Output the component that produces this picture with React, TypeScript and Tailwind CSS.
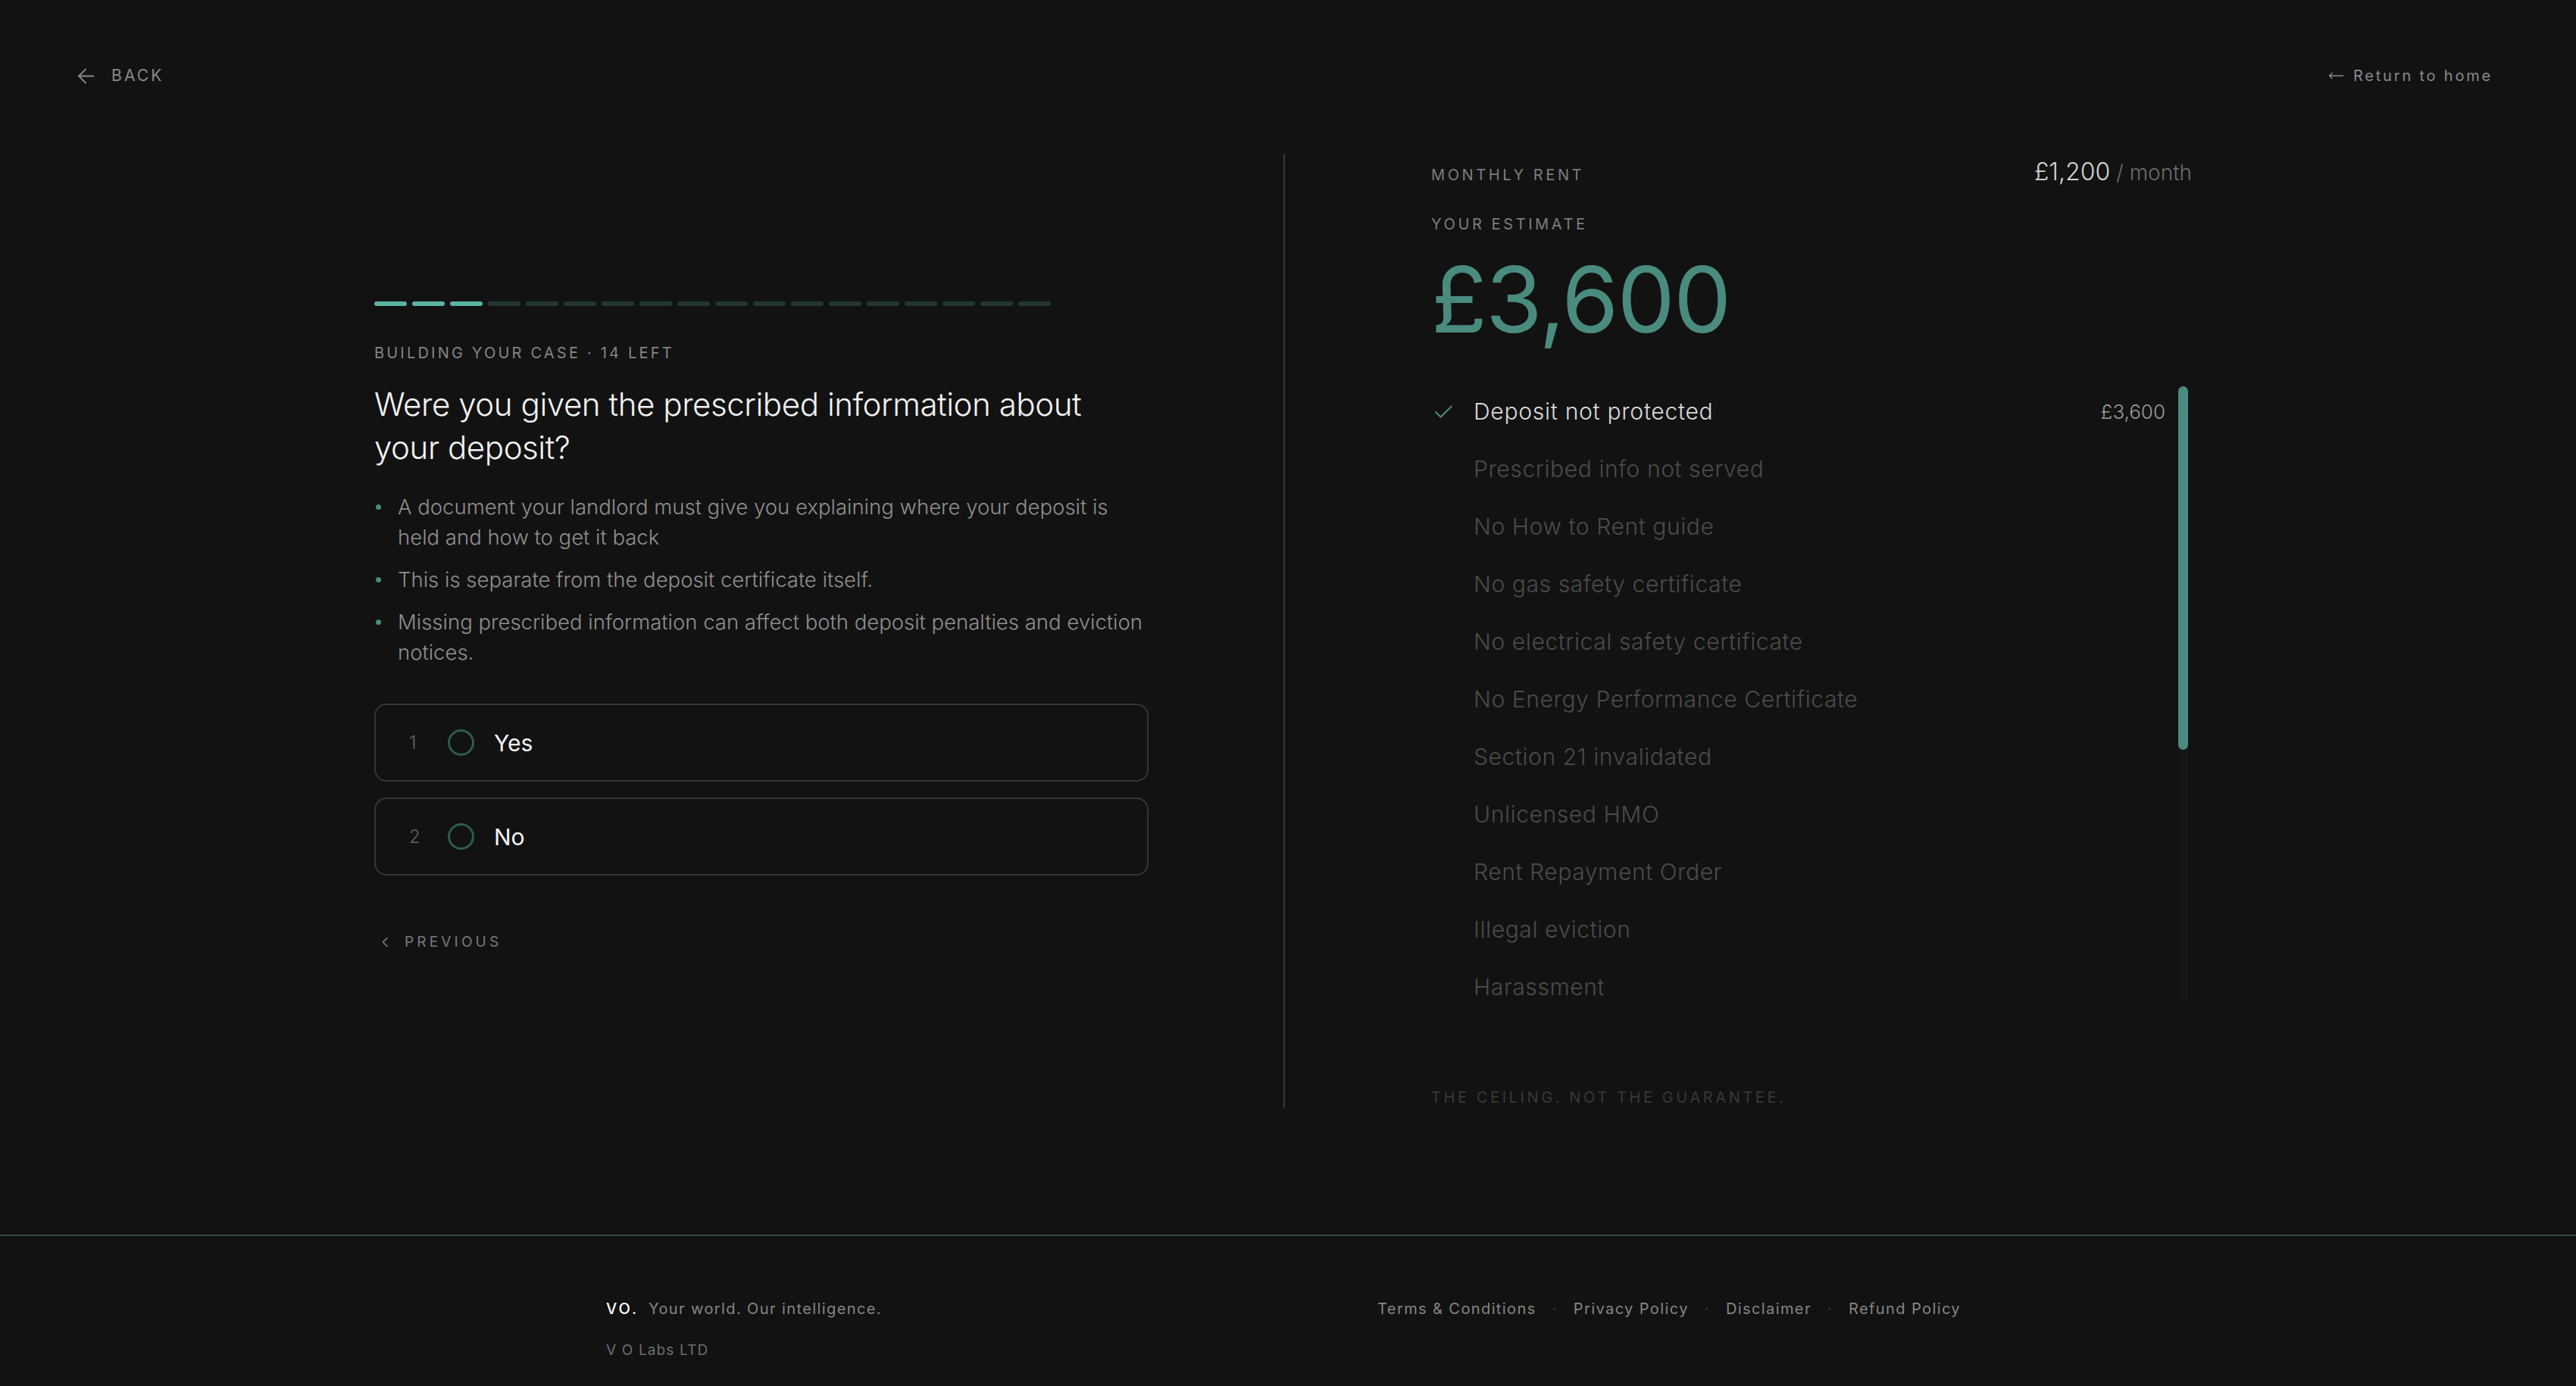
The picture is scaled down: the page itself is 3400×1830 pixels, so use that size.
import React from 'react';

const FACTORS = [
  { label: 'Deposit not protected', amount: '£3,600', done: true },
  { label: 'Prescribed info not served' },
  { label: 'No How to Rent guide' },
  { label: 'No gas safety certificate' },
  { label: 'No electrical safety certificate' },
  { label: 'No Energy Performance Certificate' },
  { label: 'Section 21 invalidated' },
  { label: 'Unlicensed HMO' },
  { label: 'Rent Repayment Order' },
  { label: 'Illegal eviction' },
  { label: 'Harassment' },
];

const NOTES = [
  'A document your landlord must give you explaining where your deposit is held and how to get it back',
  'This is separate from the deposit certificate itself.',
  'Missing prescribed information can affect both deposit penalties and eviction notices.',
];

const TOTAL_STEPS = 18;
const DONE_STEPS = 3;

function Progress() {
  return (
    <div className="flex gap-[7px]">
      {Array.from({ length: TOTAL_STEPS }).map((_, i) => (
        <div
          key={i}
          className={i < DONE_STEPS ? 'h-[6px] w-[43px] rounded-full bg-[#5bb3a5]' : 'h-[6px] w-[43px] rounded-full bg-[#223733]'}
        />
      ))}
    </div>
  );
}

function Option({ n, label }: { n: number; label: string }) {
  return (
    <button className="flex h-[103px] w-full items-center rounded-[16px] border-2 border-[#363636] pl-[44px] text-left">
      <span className="w-[16px] text-[24px] leading-none font-light text-[#626262]">{n}</span>
      <span className="ml-[35px] h-[35px] w-[35px] rounded-full border-[3px] border-[#2f5b53]" />
      <span className="ml-[26px] text-[30px] leading-none text-[#f4f4f4]">{label}</span>
    </button>
  );
}

function Question() {
  return (
    <div className="w-[1022px]">
      <Progress />
      <div className="mt-[48px] text-[20px] leading-[28px] tracking-[0.16em] text-[#858585]">
        BUILDING YOUR CASE · 14 LEFT
      </div>
      <h1 className="mt-[25px] font-['Inter_Light','Inter',sans-serif] text-[42px] leading-[57px] font-light tracking-[-0.01em] text-[#f2f2f2]">
        Were you given the prescribed information about your deposit?
      </h1>
      <ul className="mt-[30px] flex flex-col gap-[16px]">
        {NOTES.map(note => (
          <li key={note} className="flex">
            <span className="flex h-[40px] w-[31px] shrink-0 items-center">
              <span className="ml-[2px] h-[7px] w-[7px] rounded-full bg-[#4a8b7f]" />
            </span>
            <span className="font-['Inter_Light','Inter',sans-serif] text-[27.5px] leading-[40px] font-light text-[#8f8f8f]">{note}</span>
          </li>
        ))}
      </ul>
      <div className="mt-[48px] flex flex-col gap-[21px]">
        <Option n={1} label="Yes" />
        <Option n={2} label="No" />
      </div>
      <button className="mt-[74px] flex h-[28px] items-center text-[19px] tracking-[0.22em] text-[#7a7a7a]">
        <svg className="ml-[10px]" width="9" height="14" viewBox="0 0 9 14" fill="none" stroke="#7a7a7a" strokeWidth="1.6">
          <path d="M7.5 1L1.5 7l6 6" />
        </svg>
        <span className="ml-[21px]">PREVIOUS</span>
      </button>
    </div>
  );
}

function Estimate() {
  return (
    <>
      <div className="flex h-[40px] items-baseline justify-between">
        <span className="text-[20px] leading-[28px] tracking-[0.18em] text-[#7d7d7d]">MONTHLY RENT</span>
        <span className="leading-[40px]">
          <span className="text-[32px] font-light text-[#d2d2d2]">£1,200</span>
          <span className="text-[28px] font-light text-[#6b6b6b]"> / month</span>
        </span>
      </div>
      <div className="mt-[35px] text-[20px] leading-[28px] tracking-[0.18em] text-[#7d7d7d]">YOUR ESTIMATE</div>
      <div className="mt-[25px] text-[121px] leading-none font-normal tracking-[-0.015em] text-[#4a8b7f]">£3,600</div>

      <div className="mt-[54px] flex h-[817px]">
        <ul className="flex flex-1 flex-col gap-[10px]">
          {FACTORS.map(f => (
            <li key={f.label} className="flex h-[66px] shrink-0 items-center">
              <span className="flex w-[56px] shrink-0 items-center">
                {f.done && (
                  <svg className="ml-[4px]" width="25" height="17" viewBox="0 0 25 17" fill="none" stroke="#4a8b7f" strokeWidth="2">
                    <path d="M1.5 8.5l7 7L23.5 1" />
                  </svg>
                )}
              </span>
              <span
                className={
                  f.done
                    ? "font-['Inter_Light','Inter',sans-serif] text-[30px] font-light tracking-[0.025em] text-[#dadada]"
                    : "font-['Inter_Light','Inter',sans-serif] text-[30px] font-light tracking-[0.02em] text-[#4b4b4b]"
                }
              >
                {f.label}
              </span>
              {f.amount && <span className="ml-auto text-[26px] font-light text-[#9a9a9a]">{f.amount}</span>}
            </li>
          ))}
        </ul>
        {/* scroll track */}
        <div className="ml-[17px] mr-[5px] w-[13px] rounded-full bg-[#151515]">
          <div className="h-[480px] rounded-full bg-[#4a8b7f]" />
        </div>
      </div>

      <div className="mt-[108px] text-[20px] leading-[28px] tracking-[0.18em] text-[#383838]">
        THE CEILING. NOT THE GUARANTEE.
      </div>
    </>
  );
}

function Footer() {
  const links = ['Terms & Conditions', 'Privacy Policy', 'Disclaimer', 'Refund Policy'];
  return (
    <footer className="mt-[167px] border-t-2 border-[#2c4944] pt-[82px] pb-[34px]">
      <div className="mx-auto flex w-[1800px] items-start justify-between pr-[12px]">
        <div>
          <div className="flex h-[28px] items-baseline gap-[13px] leading-[28px]">
            <span className="text-[20px] font-medium tracking-[0.15em] text-white">VO.</span>
            <span className="text-[20px] tracking-[0.07em] text-[#858585]">Your world. Our intelligence.</span>
          </div>
          <div className="mt-[28px] text-[19px] leading-[26px] tracking-[0.06em] text-[#6e6e6e]">V O Labs LTD</div>
        </div>
        <nav className="flex h-[28px] items-center gap-[21px] text-[20px] tracking-[0.07em] text-[#858585]">
          {links.map((l, i) => (
            <React.Fragment key={l}>
              {i > 0 && <span className="text-[#3d3d3d]">·</span>}
              <a href="#">{l}</a>
            </React.Fragment>
          ))}
        </nav>
      </div>
    </footer>
  );
}

export default function App() {
  return (
    <div className="flex min-h-screen flex-col bg-[#121212] font-['Inter',sans-serif]">
      <header className="flex h-[200px] items-center justify-between pl-[102px] pr-[110px]">
        <a href="#" className="flex items-center text-[21px] tracking-[0.15em] text-[#8a8a8a]">
          <svg width="23" height="23" viewBox="0 0 23 23" fill="none" stroke="#8a8a8a" strokeWidth="1.8">
            <path d="M22 11.5H2M11.5 2L2 11.5l9.5 9.5" />
          </svg>
          <span className="ml-[22px]">BACK</span>
        </a>
        <a href="#" className="flex items-center text-[20px] tracking-[0.14em] text-[#8a8a8a]">
          <svg width="20" height="10" viewBox="0 0 20 10" fill="none" stroke="#8a8a8a" strokeWidth="1.4">
            <path d="M20 5H1.5M5.5 1L1.5 5l4 4" />
          </svg>
          <span className="ml-[13px]">Return to home</span>
        </a>
      </header>

      <main className="mt-[3px] flex justify-center">
        <section className="flex w-[1200px] flex-col justify-center pb-[10px]">
          <Question />
        </section>
        <div className="w-[2px] bg-[#263f3b]" />
        <section className="flex w-[1210px] flex-col pt-[4px] pl-[193px] pr-[13px]">
          <Estimate />
        </section>
      </main>

      <Footer />
    </div>
  );
}
